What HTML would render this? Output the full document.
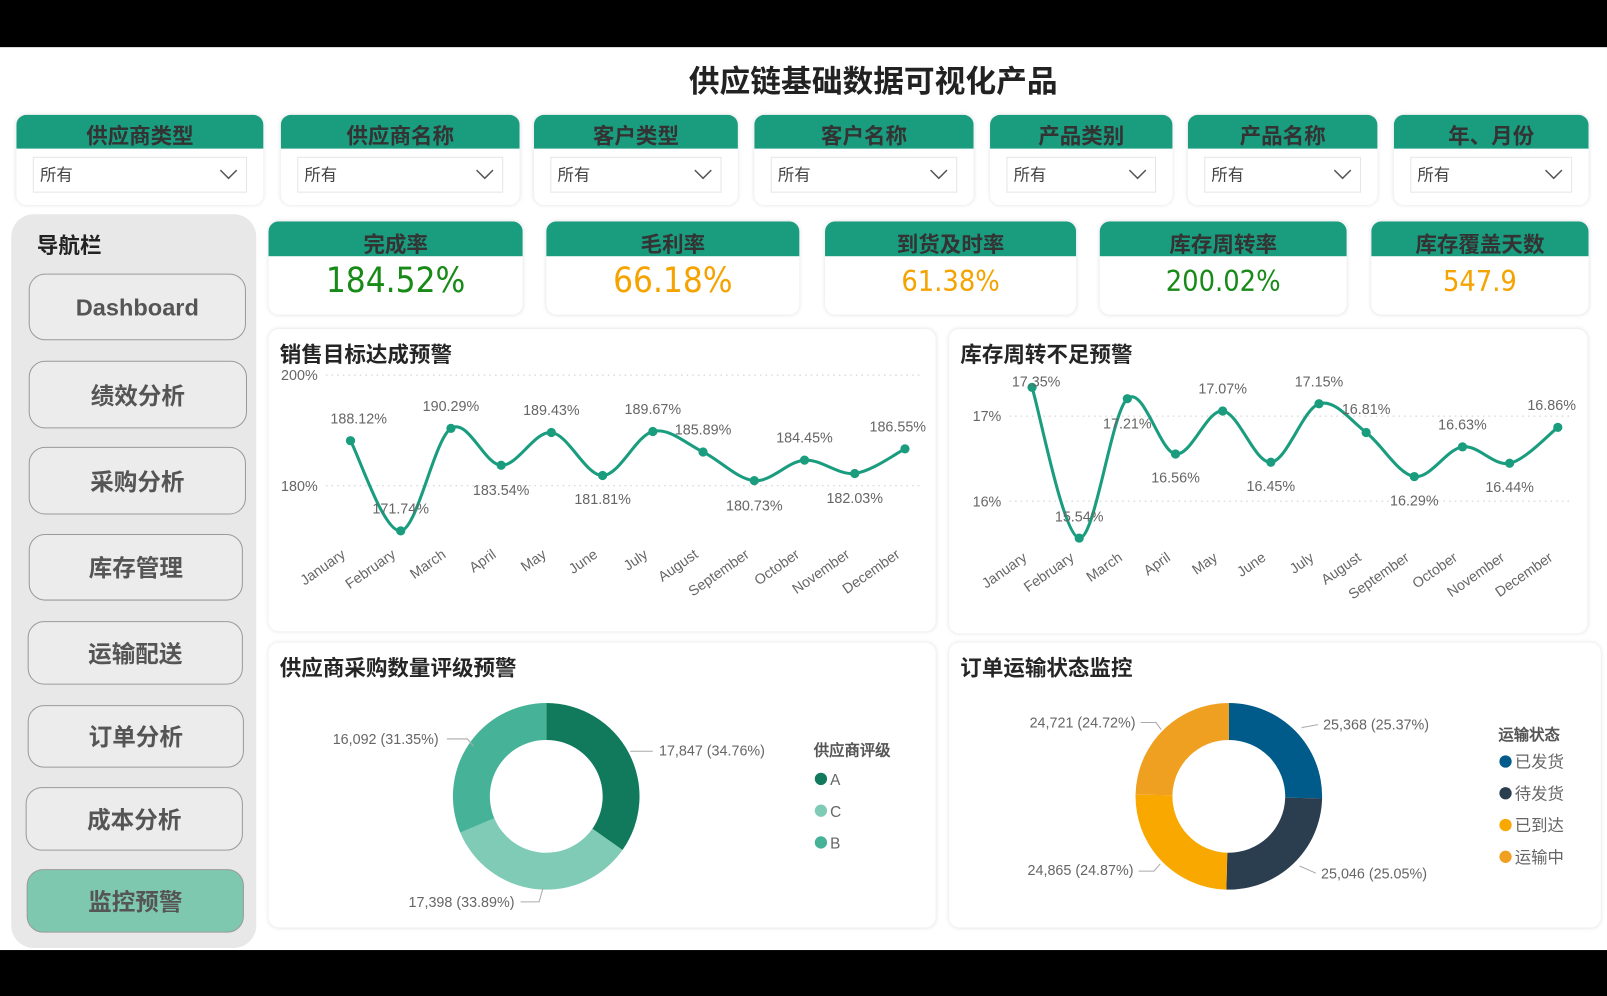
<!DOCTYPE html>
<html><head><meta charset="utf-8">
<style>
html,body{margin:0;padding:0;width:1607px;height:996px;overflow:hidden;background:#000;}
#w{position:absolute;left:0;top:0;width:1568px;height:972px;transform:scale(1.02487);transform-origin:0 0;font-family:"Liberation Sans","Noto Sans CJK SC",sans-serif;}
.a{position:absolute;}
.white{left:0;top:46px;width:1568px;height:881px;background:#fff;}
.card{position:absolute;background:#fff;border-radius:10px;box-shadow:0 0 4px rgba(0,0,0,.12);overflow:hidden;}
.hd{background:#1a9c7f;height:33px;text-align:center;font-size:21px;font-weight:bold;color:#333;line-height:44px;overflow:hidden;}
.dd{position:absolute;top:41px;left:16px;right:16px;height:33px;border:1px solid #e6e6e6;font-size:16px;color:#444;line-height:36px;padding-left:6px;}
.dd svg{position:absolute;right:8px;top:10px;}
.nav{left:11px;top:209px;width:239px;height:716px;background:#e8e8e8;border-radius:22px;}
.btn{position:absolute;border:1.5px solid #9a9a9a;border-radius:16px;background:#ececec;text-align:center;font-size:23px;font-weight:bold;color:#555;box-sizing:border-box;}
.kv{text-align:center;font-size:34px;font-family:"Liberation Sans Narrow","DejaVu Sans Condensed","Liberation Sans",sans-serif;margin-top:4px;}
.ttl{position:absolute;font-size:21px;font-weight:bold;color:#252525;}
</style></head><body><div id="w">
<div class="a white"></div>
<div class="a" style="left:0;top:80px;width:1704px;text-align:center;font-size:30px;font-weight:bold;color:#222;line-height:2px;"><span style="position:relative;top:0">供应链基础数据可视化产品</span></div>

<div id="filters"></div>

<div class="a nav"></div>
<div class="a" style="left:36px;top:224px;font-size:21px;font-weight:bold;color:#222;">导航栏</div>
<div id="btns"></div>

<div id="kpis"></div>

<div class="card" style="left:262px;top:321px;width:651px;height:295px;"></div>
<div class="card" style="left:926px;top:321px;width:623px;height:297px;"></div>
<div class="card" style="left:262px;top:627px;width:651px;height:278px;"></div>
<div class="card" style="left:926px;top:627px;width:636px;height:278px;"></div>
<div class="ttl" style="left:273px;top:330px;">销售目标达成预警</div>
<div class="ttl" style="left:937px;top:330px;">库存周转不足预警</div>
<div class="ttl" style="left:273px;top:636px;">供应商采购数量评级预警</div>
<div class="ttl" style="left:937px;top:636px;">订单运输状态监控</div>

<svg id="sv" class="a" style="left:0;top:0" width="1568" height="972" font-family="Liberation Sans, sans-serif"></svg>
</div>
<script>
var F=[["供应商类型",16,257],["供应商名称",274,507],["客户类型",521,720],["客户名称",736,950],["产品类别",966,1144],["产品名称",1159,1344],["年、月份",1360,1550]];
var h="";F.forEach(function(f){h+='<div class="card" style="left:'+f[1]+'px;top:112px;width:'+(f[2]-f[1])+'px;height:88px;"><div class="hd">'+f[0]+'</div><div class="dd">所有<svg width="18" height="12"><path d="M1 2 L9 10 L17 2" fill="none" stroke="#555" stroke-width="1.5"/></svg></div></div>';});
document.getElementById("filters").innerHTML=h;
var B=[["Dashboard",28,240,267,332],["绩效分析",28,241,352,418],["采购分析",28,240,436,502],["库存管理",28,237,521,586],["运输配送",27,237,606,668],["订单分析",27,238,688,749],["成本分析",25,237,768,830],["监控预警",26,238,848,910]];
h="";B.forEach(function(b,i){h+='<div class="btn" style="left:'+b[1]+'px;top:'+b[3]+'px;width:'+(b[2]-b[1])+'px;height:'+(b[4]-b[3])+'px;line-height:'+(b[4]-b[3])+'px;'+(i==7?'background:#7fc8b0;':'')+'">'+b[0]+'</div>';});
document.getElementById("btns").innerHTML=h;
var K=[["完成率",262,510,"184.52%","#178a17"],["毛利率",533,780,"66.18%","#f5a300"],["到货及时率",805,1050,"61.38%","#f5a300"],["库存周转率",1073,1314,"200.02%","#178a17"],["库存覆盖天数",1338,1550,"547.9","#f5a300"]];
h="";K.forEach(function(k,i){h+='<div class="card" style="left:'+k[1]+'px;top:216px;width:'+(k[2]-k[1])+'px;height:91px;"><div class="hd" style="height:34px;line-height:48px">'+k[0]+'</div><div class="kv" style="color:'+k[4]+';'+(i>1?'font-size:28px;margin-top:8px':'')+'">'+k[3]+'</div></div>';});
document.getElementById("kpis").innerHTML=h;

var s="";
function T(x,y,t,sz,c,anc,extra){return '<text x="'+x+'" y="'+y+'" font-size="'+(sz||14)+'" fill="'+(c||"#666")+'" text-anchor="'+(anc||"middle")+'" '+(extra||"")+'>'+t+'</text>';}
function curve(p){var d="M"+p[0][0]+","+p[0][1];for(var i=0;i<p.length-1;i++){var p0=p[i-1]||p[i],p1=p[i],p2=p[i+1],p3=p[i+2]||p2;var k=6;d+=" C"+(p1[0]+(p2[0]-p0[0])/k)+","+(p1[1]+(p2[1]-p0[1])/k)+" "+(p2[0]-(p3[0]-p1[0])/k)+","+(p2[1]-(p3[1]-p1[1])/k)+" "+p2[0]+","+p2[1];}return d;}
var M=["January","February","March","April","May","June","July","August","September","October","November","December"];
function line(pts,labs,grid,gx0,gx1,ylab,xy){
 grid.forEach(function(g){s+='<line x1="'+gx0+'" x2="'+gx1+'" y1="'+g[0]+'" y2="'+g[0]+'" stroke="#ccc" stroke-dasharray="1.5 4"/>';s+=T(gx0-8,g[0]+5,g[1],14,"#666","end");});
 s+='<path d="'+curve(pts)+'" fill="none" stroke="#1a9c7f" stroke-width="3"/>';
 pts.forEach(function(p,i){s+='<circle cx="'+p[0]+'" cy="'+p[1]+'" r="4.5" fill="#1a9c7f"/>';s+=T(labs[i][0],labs[i][1]+5,labs[i][2],14,"#666");s+=T(p[0]-4,xy,M[i],14,"#666","end",'transform="rotate(-35 '+(p[0]-4)+' '+xy+')"');});
}
line([[342,430],[391,518],[440,418],[489,454],[538,422],[588,464],[637,421],[686,441],[736,469],[785,449],[834,462],[883,438]],
[[350,408,"188.12%"],[391,496,"171.74%"],[440,396,"190.29%"],[489,478,"183.54%"],[538,400,"189.43%"],[588,487,"181.81%"],[637,399,"189.67%"],[686,419,"185.89%"],[736,493,"180.73%"],[785,427,"184.45%"],[834,486,"182.03%"],[876,416,"186.55%"]],
[[366,"200%"],[474,"180%"]],318,900,0,543);
line([[1007,378],[1053,525],[1100,389],[1147,443],[1193,401],[1240,451],[1287,394],[1333,422],[1380,465],[1427,436],[1473,452],[1520,417]],
[[1011,372,"17.35%"],[1053,504,"15.54%"],[1100,413,"17.21%"],[1147,466,"16.56%"],[1193,379,"17.07%"],[1240,474,"16.45%"],[1287,372,"17.15%"],[1333,399,"16.81%"],[1380,488,"16.29%"],[1427,414,"16.63%"],[1473,475,"16.44%"],[1514,395,"16.86%"]],
[[406,"17%"],[489,"16%"]],985,1535,0,546);
function donut(cx,cy,R,r,segs){var a=0;segs.forEach(function(g){var a1=a+g[0]*2*Math.PI;function P(rr,t){return (cx+rr*Math.sin(t)).toFixed(1)+","+(cy-rr*Math.cos(t)).toFixed(1);}var lg=(a1-a)>Math.PI?1:0;s+='<path d="M'+P(R,a)+' A'+R+','+R+' 0 '+lg+' 1 '+P(R,a1)+' L'+P(r,a1)+' A'+r+','+r+' 0 '+lg+' 0 '+P(r,a)+'Z" fill="'+g[1]+'"/>';a=a1;});}
donut(533,777,91,55,[[.3476,"#127a5c"],[.3389,"#7fcbb6"],[.3135,"#46b398"]]);
donut(1199,777,91,55,[[.2537,"#005b8a"],[.2505,"#2b3e50"],[.2487,"#f9a800"],[.2472,"#f0a020"]]);
function lead(pts){s+='<polyline points="'+pts+'" fill="none" stroke="#aaa" stroke-width="1"/>';}
lead("615,733 637,733");s+=T(643,737,"17,847 (34.76%)",14,"#666","start");
lead("436,721 456,721 462,728");s+=T(428,726,"16,092 (31.35%)",14,"#666","end");
lead("508,880 526,880 530,866");s+=T(502,885,"17,398 (33.89%)",14,"#666","end");
s+=T(794,737,"供应商评级",15,"#555","start",'font-weight="bold"');
[["A","#127a5c",760],["C","#7fcbb6",791],["B","#46b398",822]].forEach(function(l){s+='<circle cx="801" cy="'+l[2]+'" r="6" fill="'+l[1]+'"/>';s+=T(810,l[2]+6,l[0],15,"#666","start");});
lead("1270,710 1286,707");s+=T(1291,712,"25,368 (25.37%)",14,"#666","start");
lead("1113,705 1128,705 1133,712");s+=T(1108,710,"24,721 (24.72%)",14,"#666","end");
lead("1268,845 1284,852");s+=T(1289,857,"25,046 (25.05%)",14,"#666","start");
lead("1111,850 1126,850 1132,843");s+=T(1106,854,"24,865 (24.87%)",14,"#666","end");
s+=T(1462,722,"运输状态",15,"#555","start",'font-weight="bold"');
[["已发货","#005b8a",743],["待发货","#2b3e50",774],["已到达","#f9a800",805],["运输中","#f0a020",836]].forEach(function(l){s+='<circle cx="1469" cy="'+l[2]+'" r="6" fill="'+l[1]+'"/>';s+=T(1478,l[2]+6,l[0],16,"#666","start");});
document.getElementById("sv").innerHTML=s;
</script>
</body></html>
